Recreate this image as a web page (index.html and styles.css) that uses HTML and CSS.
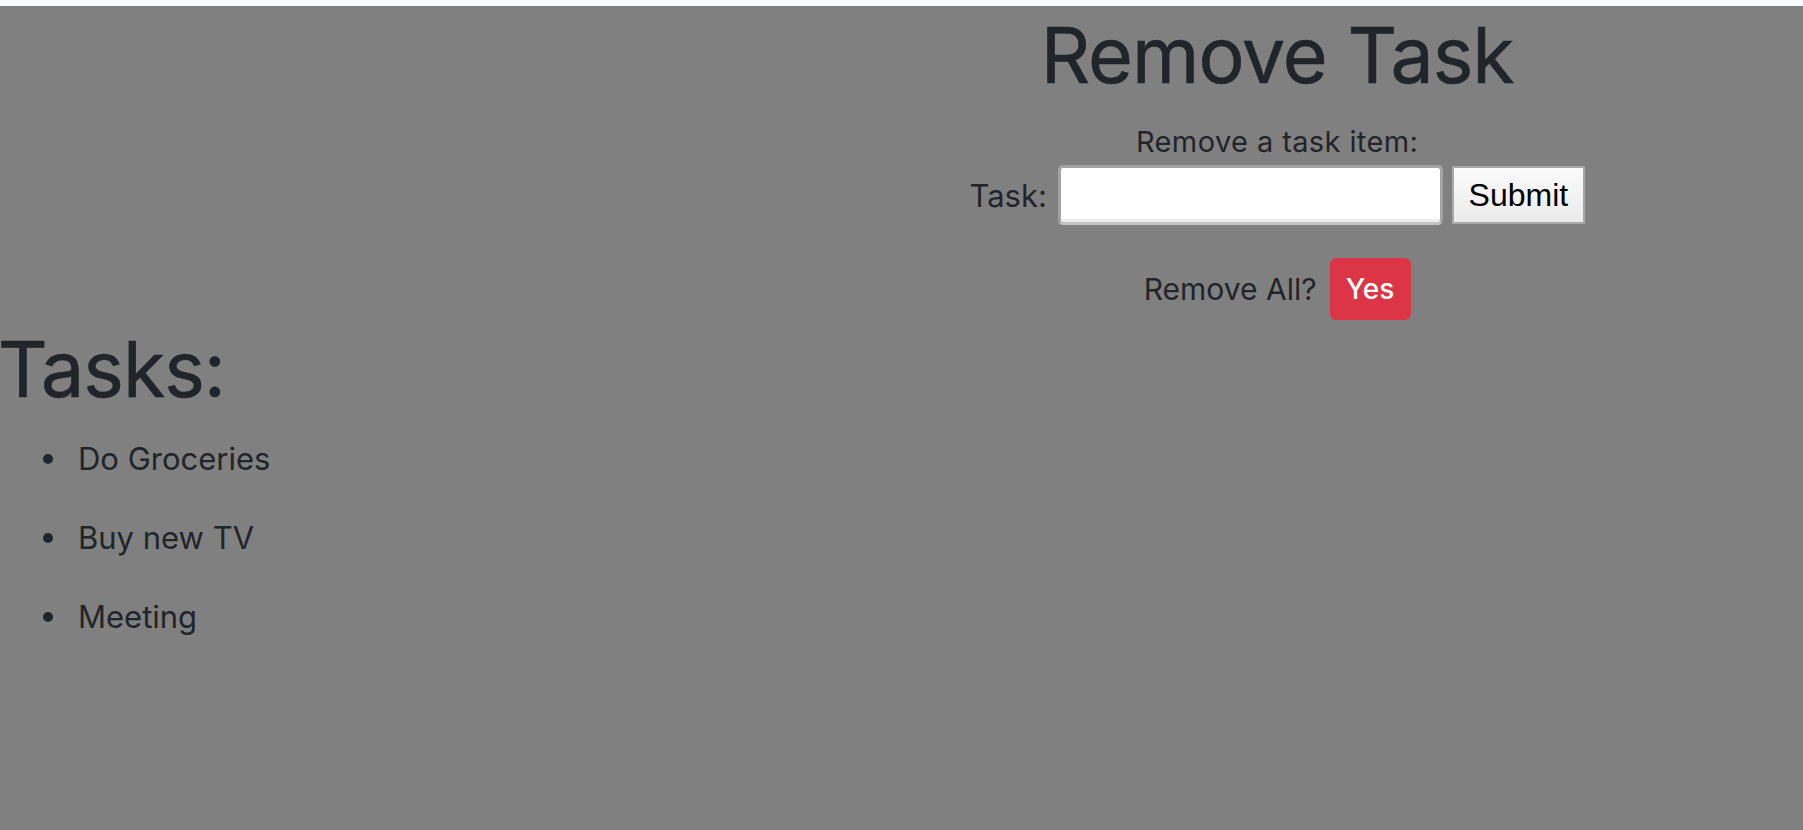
FILE: index.html
```html
<!DOCTYPE html>
<html lang="en">
<head>
<meta charset="utf-8">
<title>Remove Task</title>
<link rel="stylesheet" href="styles.css">
</head>
<body>
<div class="topbar"></div>
<section class="remove-panel">
  <h1 class="title">Remove Task</h1>
  <p class="subtitle">Remove a task item:</p>
  <form class="task-form">
    <label class="task-label" for="task">Task:</label>
    <input class="task-input" id="task" type="text">
    <button class="submit-btn" type="button">Submit</button>
  </form>
  <div class="remove-all">
    <span class="remove-all-text">Remove All?</span>
    <button class="yes-btn" type="button">Yes</button>
  </div>
</section>
<section class="tasks">
  <h1 class="title tasks-title">Tasks:</h1>
  <ul class="task-list">
    <li>Do Groceries</li>
    <li>Buy new TV</li>
    <li>Meeting</li>
  </ul>
</section>
</body>
</html>
```

FILE: styles.css
```css
html, body {
  margin: 0;
  padding: 0;
}
body {
  background: #808080;
  color: #212529;
  font-family: Inter, "Noto Sans", sans-serif;
  height: 830px;
  overflow: hidden;
}
.topbar {
  height: 6px;
  background: #f8f9fa;
}
.remove-panel {
  width: 58.3333%;
  margin-left: auto;
  text-align: center;
}
.title {
  font-size: 77px;
  font-weight: 400;
  line-height: 92px;
  margin: 3px 0 0;
  letter-spacing: -1px;
  -webkit-text-stroke: 0.6px #212529;
}
.subtitle {
  font-size: 29px;
  line-height: 34px;
  letter-spacing: 0.4px;
  margin: 24px 0 0;
}
.task-form {
  display: flex;
  justify-content: center;
  align-items: center;
  margin-top: 6px;
}
.task-label {
  font-size: 31px;
  margin-right: 11px;
}
.task-input {
  box-sizing: border-box;
  width: 385px;
  height: 60px;
  border: 3px solid #a3a3a3;
  border-bottom-color: #c4c4c4;
  border-radius: 5px;
  background: #fff;
  box-shadow: inset 0 -3px 0 #ededed;
  margin: 0 9px 0 0;
  padding: 0 8px;
  font-size: 28px;
}
.submit-btn {
  box-sizing: border-box;
  width: 133px;
  height: 58px;
  border: 2px solid #a9a9a9;
  background: linear-gradient(#fbfbfb, #ebebeb);
  font-family: "Liberation Sans", Arial, sans-serif;
  font-size: 32px;
  color: #000;
  padding: 0;
  border-radius: 0;
}
.remove-all {
  display: flex;
  justify-content: center;
  align-items: center;
  margin-top: 33px;
}
.remove-all-text {
  font-size: 30px;
  margin-right: 13px;
}
.yes-btn {
  box-sizing: border-box;
  width: 81px;
  height: 62px;
  border: none;
  border-radius: 6px;
  background: #dc3545;
  color: #fff;
  font-family: Inter, "Noto Sans", sans-serif;
  font-size: 28px;
  font-weight: 500;
  padding: 0;
}
.tasks-title {
  margin: 3px 0 0 -2px;
}
.task-list {
  list-style: none;
  margin: 25px 0 0;
  padding-left: 43px;
  font-size: 31px;
}
.task-list li {
  line-height: 38px;
  margin-bottom: 41px;
}
.task-list li::before {
  content: "";
  display: inline-block;
  width: 10px;
  height: 10px;
  border-radius: 50%;
  background: #212529;
  margin-right: 25px;
  vertical-align: 6px;
}
```
